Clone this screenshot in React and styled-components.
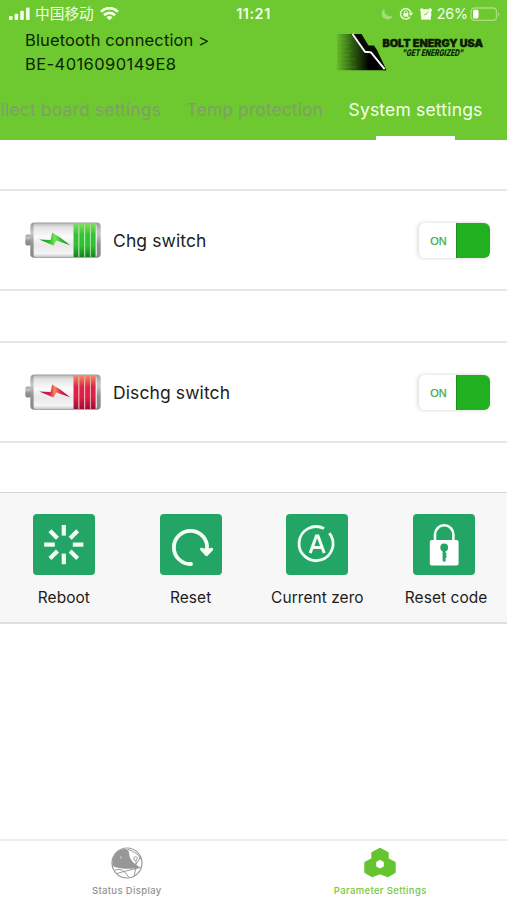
import React from 'react';
import styled, { createGlobalStyle } from 'styled-components';

const GlobalStyle = createGlobalStyle`
    * {
        box-sizing: border-box;
    }

    body {
        margin: 0;
        background: #fff;
        font-family: Inter, "Noto Sans CJK SC", sans-serif;
        color: #1c1c1c;
    }

    svg {
        display: block;
        flex-shrink: 0;
    }
`;

const Screen = styled.div`
    width: 507px;
    height: 900px;
    display: flex;
    flex-direction: column;
    overflow: hidden;
`;

const Header = styled.header`
    height: 140px;
    background: #6dc92f;
    display: flex;
    flex-direction: column;
`;

const StatusBar = styled.div`
    height: 28px;
    padding: 0 7px 0 9px;
    display: grid;
    grid-template-columns: 1fr auto 1fr;
    align-items: center;
    color: #f1ffe6;
    font-size: 14px;
`;

const StatusGroup = styled.div`
    display: flex;
    align-items: center;
    justify-content: ${props => props.$end ? 'flex-end' : 'flex-start'};
`;

const Carrier = styled.span`
    margin: 0 6px 0 5px;
    font-family: "Noto Sans CJK SC", sans-serif;
    font-size: 14.7px;
    line-height: 18px;
    padding-bottom: 2px;
`;

const Clock = styled.span`
    margin-right: 2px;
    padding-bottom: 1px;
    font-weight: 600;
    font-size: 14.5px;
    letter-spacing: 0.5px;
`;

const Percent = styled.span`
    margin: 0 2px 0 5px;
    padding-bottom: 1px;
    font-size: 14.3px;
    letter-spacing: -0.1px;
`;

const DeviceRow = styled.div`
    display: flex;
    justify-content: space-between;
    height: 52px;
    padding: 0 23px 0 25px;
`;

const DeviceName = styled.div`
    font-size: 16.5px;
    line-height: 24px;
    letter-spacing: ${props => props.$spacing};
    color: #0c2503;
`;

const Tabs = styled.nav`
    height: 60px;
    display: flex;
    justify-content: flex-end;
    gap: 25.5px;
    padding-right: 24.5px;
    overflow: hidden;
`;

const Tab = styled.div`
    display: flex;
    flex-direction: column;
    align-items: center;
    justify-content: space-between;
    flex-shrink: 0;
    padding-top: 18px;
    font-size: 17.5px;
    line-height: 24px;
    letter-spacing: ${props => props.$spacing};
    white-space: nowrap;
    color: ${props => props.$active ? '#f4ffe9' : '#7f9f66'};
`;

const TabLine = styled.div`
    width: 79px;
    height: 4px;
    background: #fff;
`;

const SwitchRow = styled.section`
    height: 102px;
    margin-top: ${props => props.$gap};
    padding: 0 17px 0 25px;
    border-top: 2px solid #e6e6e6;
    border-bottom: 2px solid #e6e6e6;
    display: flex;
    align-items: center;
`;

const SwitchName = styled.div`
    flex: 1;
    margin-left: 12px;
    font-size: 17.5px;
    letter-spacing: 0.1px;
`;

const Toggle = styled.div`
    display: flex;
    width: 71px;
    height: 35px;
    border-radius: 6px;
    box-shadow: -1px 0 4px rgba(0, 0, 0, 0.18);
    overflow: hidden;
`;

const ToggleLabel = styled.div`
    width: 37px;
    display: flex;
    align-items: center;
    justify-content: center;
    padding: 2px 0 0 2px;
    background: #fff;
    font-family: "Liberation Sans", sans-serif;
    font-size: 11px;
    color: #3dae45;
    -webkit-text-stroke: 0.25px #3dae45;
`;

const ToggleKnob = styled.div`
    flex: 1;
    background: #20b020;
    border-left: 1px solid #159319;
`;

const Actions = styled.section`
    height: 132px;
    margin-top: 49px;
    padding-top: 21px;
    display: grid;
    grid-template-columns: repeat(4, 1fr);
    background: #f7f7f7;
    border-top: 1px solid #d6d6d6;
    border-bottom: 2px solid #e0e0e0;
`;

const Action = styled.div`
    display: flex;
    flex-direction: column;
    align-items: center;
    gap: 12px;
    padding-left: 1px;
`;

const ActionTile = styled.div`
    width: 62px;
    height: 61px;
    border-radius: 4px;
    background: #23a566;
`;

const ActionName = styled.div`
    padding-left: ${props => props.$indent || '0'};
    font-size: 15.5px;
    line-height: 21px;
    letter-spacing: 0.05px;
    white-space: nowrap;
`;

const BottomNav = styled.nav`
    height: 61px;
    margin-top: auto;
    border-top: 2px solid #ececec;
    display: grid;
    grid-template-columns: 1fr 1fr;
`;

const NavItem = styled.div`
    display: flex;
    flex-direction: column;
    align-items: center;
    gap: 5px;
    padding-top: 6px;
    font-size: 9.5px;
    font-weight: 500;
    line-height: 13px;
    letter-spacing: 0.35px;
    color: ${props => props.$active ? '#74c83e' : '#939393'};
`;

const SignalIcon = () => (
    <svg width="21" height="14" viewBox="0 0 21 14" fill="#f4ffe9">
        <rect x="0" y="9" width="3.6" height="4" rx="1" />
        <rect x="5.6" y="6.8" width="3.6" height="6.2" rx="1" />
        <rect x="11.2" y="3.8" width="3.6" height="9.2" rx="1" />
        <rect x="17" y="0.5" width="3.6" height="12.5" rx="1" />
    </svg>
);

const WifiIcon = () => (
    <svg width="19" height="14" viewBox="0 0 19 14" fill="none" stroke="#f4ffe9" strokeWidth="2.7">
        <path d="M1 4.7 C5.8 0 13.2 0 18 4.7" />
        <path d="M4 8.2 C7.2 5.2 11.8 5.2 15 8.2" />
        <path d="M9.5 13.2 L6.4 10.2 Q9.5 7.8 12.6 10.2 Z" fill="#f4ffe9" stroke="none" />
    </svg>
);

const StatusIcons = () => (
    <svg width="52" height="16" viewBox="0 0 52 16">
        <path d="M4.6 2.4 C0.6 5 1.2 11 4.6 12.6 C8 14.4 11.4 13 12.6 10 C7.6 11.4 3.4 7.6 4.6 2.4 Z" fill="#a4dc78" />
        <g fill="none" stroke="#e9fadb" strokeWidth="1.4">
            <path d="M30 11 A5.3 5.3 0 1 1 30.9 6.6" />
            <path d="M24.3 7.7 V6.2 A1.5 1.5 0 0 1 27.3 6.2 V7.7" strokeWidth="1" />
        </g>
        <path d="M28.6 6.8 H33.2 L30.9 10 Z" fill="#e9fadb" />
        <rect x="23.3" y="7" width="5" height="3.8" rx="0.6" fill="#e9fadb" />
        <g fill="#f4ffe9">
            <circle cx="46" cy="8.4" r="5.4" />
            <circle cx="42" cy="4.2" r="1.9" />
            <circle cx="50" cy="4.2" r="1.9" />
            <circle cx="42.4" cy="12.6" r="1.4" />
            <circle cx="49.6" cy="12.6" r="1.4" />
        </g>
        <path d="M47.8 5.6 L46 8.6 H44" fill="none" stroke="#6dc92f" strokeWidth="0.9" />
    </svg>
);

const BatteryIcon = () => (
    <svg width="30" height="15" viewBox="0 0 30 15">
        <rect x="1" y="1" width="25.5" height="12.4" rx="3.4" fill="none" stroke="#a9df80" strokeWidth="1.3" />
        <rect x="3" y="2.8" width="5.5" height="8.8" rx="1.5" fill="#fff" />
        <path d="M28 5 Q30.6 7.2 28 9.4 Z" fill="#a9df80" />
    </svg>
);

const BoltLogo = () => (
    <svg width="148" height="46" viewBox="0 0 148 46">
        <defs>
            <linearGradient id="logoFade" x1="0" x2="1" y1="0" y2="0">
                <stop offset="0" stopColor="#173405" stopOpacity="0.1" />
                <stop offset="0.3" stopColor="#102a03" stopOpacity="0.65" />
                <stop offset="0.65" stopColor="#000" />
            </linearGradient>
        </defs>
        <g transform="translate(1 5)">
            <path d="M0 1 H16 L28 19 L34 20 L49 37.3 H0 Z" fill="url(#logoFade)" />
            <path
                d="M0 6 H10 M0 10 H13 M0 14 H11 M0 18 H15 M0 22 H13 M0 26 H18 M0 30 H14 M0 34 H20"
                stroke="#6dc92f" strokeWidth="0.7" opacity="0.35"
            />
            <path d="M14 1 H24.5 L31.5 12.6 H37 L40 17 L49.5 37.3 H46 L33.5 19.5 H28 Z" fill="#050b02" />
            <path d="M15.5 1 L28 18.8 L34 19.4 L47.6 36.2" fill="none" stroke="#fff" strokeWidth="1.9" />
        </g>
        <text
            x="46.5" y="18.7" textLength="100.5" lengthAdjust="spacingAndGlyphs"
            fontFamily="Inter, sans-serif" fontWeight="900" fontSize="9.8"
            fill="#0a1b02" stroke="#0a1b02" strokeWidth="0.4"
        >
            BOLT ENERGY USA
        </text>
        <text
            transform="translate(66 28.2) skewX(-12)" textLength="61" lengthAdjust="spacingAndGlyphs"
            fontFamily="Inter, sans-serif" fontWeight="800" fontSize="9.2" fill="#0a1b02"
        >
            "GET ENERGIZED"
        </text>
    </svg>
);

const CellIcon = ({ id, light, mid, dark }) => (
    <svg width="76" height="36" viewBox="0 0 76 36">
        <defs>
            <linearGradient id={`${id}Shell`} x1="0" x2="0" y1="0" y2="1">
                <stop offset="0" stopColor="#bcbcbc" />
                <stop offset="0.12" stopColor="#e4e4e4" />
                <stop offset="0.4" stopColor="#fbfbfb" />
                <stop offset="0.65" stopColor="#e9e9e9" />
                <stop offset="0.9" stopColor="#f6f6f6" />
                <stop offset="1" stopColor="#c2c2c2" />
            </linearGradient>
            <linearGradient id={`${id}Cap`} x1="0" x2="0" y1="0" y2="1">
                <stop offset="0" stopColor="#9a9a9a" />
                <stop offset="0.3" stopColor="#c9c9c9" />
                <stop offset="0.6" stopColor="#929292" />
                <stop offset="1" stopColor="#858585" />
            </linearGradient>
            <linearGradient id={`${id}Bar`} x1="0" x2="0" y1="0" y2="1">
                <stop offset="0" stopColor={light} />
                <stop offset="0.35" stopColor={mid} />
                <stop offset="0.65" stopColor={mid} />
                <stop offset="1" stopColor={dark} />
            </linearGradient>
            <linearGradient id={`${id}Bolt`} x1="0" x2="1" y1="0" y2="0">
                <stop offset="0" stopColor={dark} />
                <stop offset="0.35" stopColor={mid} />
                <stop offset="0.5" stopColor={light} />
                <stop offset="0.7" stopColor={mid} />
                <stop offset="1" stopColor={dark} />
            </linearGradient>
        </defs>
        <rect x="0.3" y="12.4" width="6" height="11" rx="2" fill={`url(#${id}Cap)`} />
        <rect x="5.3" y="0.6" width="70.4" height="35.2" rx="4" fill={`url(#${id}Cap)`} />
        <rect x="8.6" y="1.4" width="63.2" height="33.8" rx="2" fill={`url(#${id}Shell)`} />
        <rect x="48.6" y="1.6" width="22.3" height="33.4" fill={light} opacity="0.45" />
        {[48.6, 54.4, 60.2, 65.8].map(x => (
            <rect key={x} x={x} y="1.6" width="4.7" height="33.4" fill={`url(#${id}Bar)`} />
        ))}
        <path d="M14.2 17.6 L25.6 18 L27.2 10.4 L35.2 15.4 L45.2 23.2 L31.4 18.4 L28.6 23.6 Z" fill={`url(#${id}Bolt)`} />
    </svg>
);

const RebootIcon = () => (
    <svg width="62" height="61" viewBox="0 0 62 61" stroke="#f3fff5" strokeWidth="4.2">
        {[0, 45, 90, 135, 180, 225, 270, 315].map(angle => (
            <path key={angle} d="M30.8 21.6 V11" transform={`rotate(${angle} 30.8 30.6)`} />
        ))}
    </svg>
);

const ResetIcon = () => (
    <svg width="62" height="61" viewBox="0 0 62 61" fill="none" stroke="#f3fff5" strokeWidth="3.8" strokeLinecap="round">
        <path d="M31 50 A16.6 16.6 0 1 1 47 35" />
        <path d="M41.4 35.2 L46.6 40.8 L51.8 35.2 L46.8 36.6 Z" fill="#f3fff5" strokeWidth="2.8" strokeLinejoin="round" />
    </svg>
);

const ZeroIcon = () => (
    <svg width="62" height="61" viewBox="0 0 62 61" fill="none" stroke="#f3fff5">
        <path d="M38 14.6 A17 17 0 1 0 43.4 19.1" strokeWidth="2.8" />
        <path d="M24.2 39 L30.4 22 H32 L38.2 39 M26.4 33.6 H36" strokeWidth="3" />
    </svg>
);

const LockIcon = () => (
    <svg width="62" height="61" viewBox="0 0 62 61">
        <path d="M22 27 V20.5 A9.2 9.2 0 0 1 40.4 20.5 V27" fill="none" stroke="#f3fff5" strokeWidth="2.6" />
        <rect x="16.8" y="26" width="28.8" height="25.4" rx="2" fill="#fff" />
        <circle cx="31.2" cy="33.4" r="3.9" fill="#23a566" />
        <path d="M29.6 36 H32.6 V39 L34 40 L32.6 41.2 L34 42.6 L32.6 44 V47.2 L31 48 L29.6 46.6 Z" fill="#23a566" />
    </svg>
);

const GlobeIcon = () => (
    <svg width="32" height="32" viewBox="0 0 32 32" fill="none" stroke="#999" strokeWidth="1">
        <circle cx="16" cy="16" r="15" strokeWidth="1.2" />
        <path d="M1.4 19 Q0.4 8 9 3 Q13 1 16.5 2.6 Q18.6 5 18.6 9.5 Q20 15.5 29.5 20.6 Q19 22.6 11 21.4 Q5 20.6 1.4 19 Z" fill="#979797" stroke="none" />
        <path d="M17 2.5 Q26 5 30 12 M25 13 Q26 20 23 29 M29.5 9 Q27 17 21 20 M4 23 Q12 20 18 30.5 M6 26.5 Q14 24 29.6 20.5" />
        <circle cx="24.4" cy="11.6" r="1.8" fill="#fff" />
        <path d="M10 9 V12" stroke="#d0d0d0" />
    </svg>
);

const HexIcon = () => (
    <svg width="32" height="32" viewBox="0 0 32 32">
        <path
            d="M16 1.2 L24.2 5.6 V11.6 L31.2 15.4 V25.6 L23.8 29.8 L16 26.8 L8.2 29.8 L0.8 25.6 V15.4 L7.8 11.6 V5.6 Z"
            fill="#65c52e" stroke="#65c52e" strokeWidth="1" strokeLinejoin="round"
        />
        <path d="M16 12.8 L19.8 15 V19.4 L16 21.6 L12.2 19.4 V15 Z" fill="#fff" />
    </svg>
);

const actions = [
    { name: 'Reboot', icon: <RebootIcon /> },
    { name: 'Reset', icon: <ResetIcon /> },
    { name: 'Current zero', icon: <ZeroIcon /> },
    { name: 'Reset code', icon: <LockIcon />, indent: '4px' },
];

const App = () => {
    return (
        <Screen>
            <GlobalStyle />
            <Header>
                <StatusBar>
                    <StatusGroup>
                        <SignalIcon />
                        <Carrier>中国移动</Carrier>
                        <WifiIcon />
                    </StatusGroup>
                    <Clock>11:21</Clock>
                    <StatusGroup $end>
                        <StatusIcons />
                        <Percent>26%</Percent>
                        <BatteryIcon />
                    </StatusGroup>
                </StatusBar>
                <DeviceRow>
                    <div>
                        <DeviceName $spacing="0.13px">Bluetooth connection &gt;</DeviceName>
                        <DeviceName $spacing="0.42px">BE-4016090149E8</DeviceName>
                    </div>
                    <BoltLogo />
                </DeviceRow>
                <Tabs>
                    <Tab $spacing="0.15px">Collect board settings</Tab>
                    <Tab $spacing="0.08px">Temp protection</Tab>
                    <Tab $spacing="0.18px" $active>
                        System settings
                        <TabLine />
                    </Tab>
                </Tabs>
            </Header>

            <SwitchRow $gap="49px">
                <CellIcon id="chg" light="#7ee05a" mid="#2fc136" dark="#15801f" />
                <SwitchName>Chg switch</SwitchName>
                <Toggle>
                    <ToggleLabel>ON</ToggleLabel>
                    <ToggleKnob />
                </Toggle>
            </SwitchRow>
            <SwitchRow $gap="50px">
                <CellIcon id="dischg" light="#f58a5c" mid="#dc1f4c" dark="#9c0c3a" />
                <SwitchName>Dischg switch</SwitchName>
                <Toggle>
                    <ToggleLabel>ON</ToggleLabel>
                    <ToggleKnob />
                </Toggle>
            </SwitchRow>

            <Actions>
                {actions.map(action => (
                    <Action key={action.name}>
                        <ActionTile>{action.icon}</ActionTile>
                        <ActionName $indent={action.indent}>{action.name}</ActionName>
                    </Action>
                ))}
            </Actions>

            <BottomNav>
                <NavItem>
                    <GlobeIcon />
                    Status Display
                </NavItem>
                <NavItem $active>
                    <HexIcon />
                    Parameter Settings
                </NavItem>
            </BottomNav>
        </Screen>
    );
}

export default App;
